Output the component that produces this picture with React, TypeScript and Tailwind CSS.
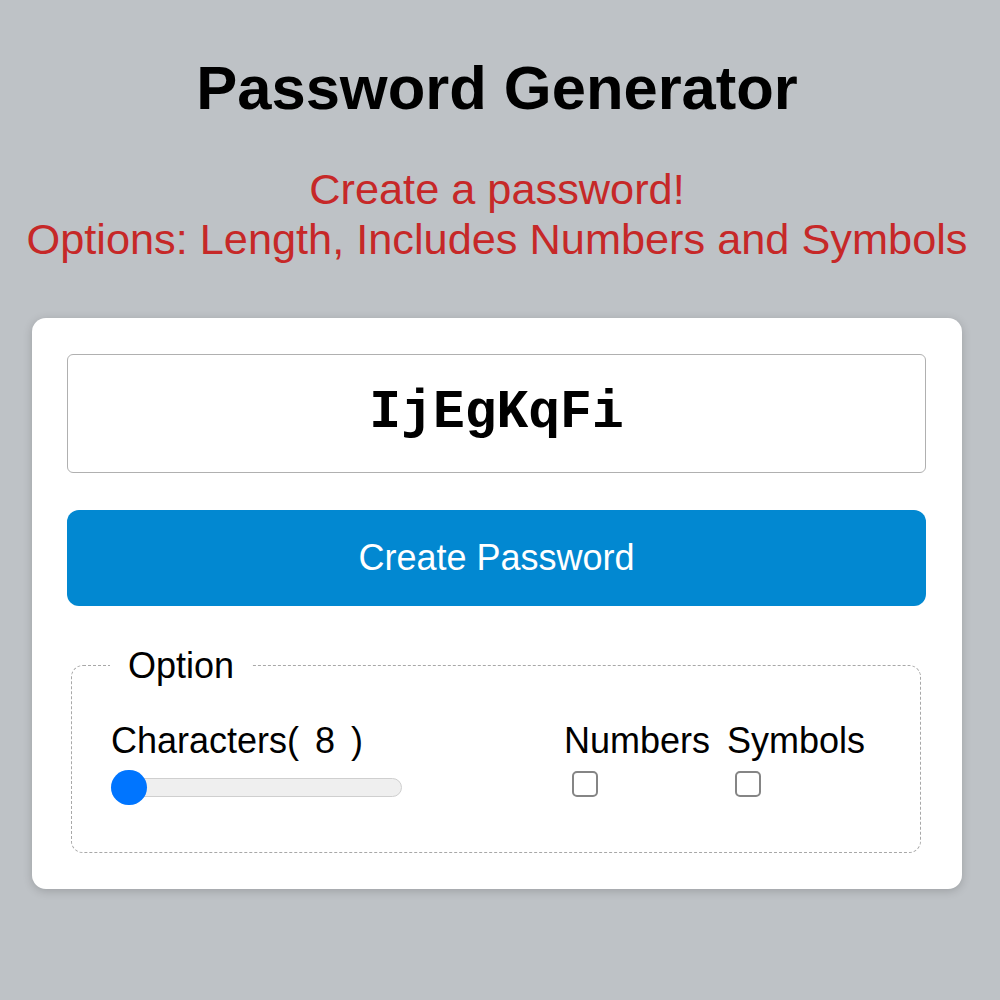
import { useState } from 'react';

export default function App() {
  const [length] = useState(8);
  const [password] = useState('IjEgKqFi');

  return (
    <div className="min-h-screen w-full bg-[#bec2c6] font-['Liberation_Sans',Arial,sans-serif]">
      <div className="flex w-[994px] flex-col items-center pt-[57px]">
        <h1 className="text-[61.5px] font-bold leading-none text-black">Password Generator</h1>
        <p className="mt-[45px] text-center text-[43.3px] leading-[50px] text-[#c62828]">
          Create a password!
          <br />
          Options: Length, Includes Numbers and Symbols
        </p>

        <div className="mt-[54px] w-[930px] rounded-[14px] bg-white pt-[36px] pr-[36px] pb-[36px] pl-[35px] shadow-[0_2px_10px_rgba(0,0,0,0.18)]">
          <div className="flex h-[119px] items-center justify-center rounded-[6px] border border-[#b0b0b0]">
            <span className="font-['Liberation_Mono','Courier_New',monospace] text-[53px] font-bold leading-none text-black">
              {password}
            </span>
          </div>

          <button className="mt-[37px] flex h-[96px] w-full items-center justify-center rounded-[12px] bg-[#0288d1] text-[36px] text-white">
            Create Password
          </button>

          <fieldset className="mt-[40px] ml-[4px] mr-[5px] rounded-[12px] border border-dashed border-[#a8a8a8] pt-[35px] pr-[55px] pb-[47px] pl-[39px]">
            <legend className="ml-[-1px] px-[18px] text-[36px] leading-[40px] text-black">Option</legend>
            <div className="flex items-start justify-between">
              <div className="flex flex-col">
                <span className="text-[36px] leading-[40px] text-black">
                  Characters(<span className="px-[16px]">{length}</span>)
                </span>
                <div className="relative mt-[9px] flex h-[35px] w-[291px] items-center">
                  <div className="h-[19px] w-full rounded-full border border-[#cfcfcf] bg-[#efefef]" />
                  <div className="absolute left-0 top-0 h-[35px] w-[36px] rounded-full bg-[#0075ff]" />
                </div>
              </div>

              <div className="flex gap-[17px]">
                {['Numbers', 'Symbols'].map((opt) => (
                  <div key={opt} className="flex flex-col items-start">
                    <span className="text-[36px] leading-[40px] text-black">{opt}</span>
                    <span className="ml-[8px] mt-[10px] h-[26px] w-[26px] rounded-[5px] border-2 border-[#858585] bg-white" />
                  </div>
                ))}
              </div>
            </div>
          </fieldset>
        </div>
      </div>
    </div>
  );
}
